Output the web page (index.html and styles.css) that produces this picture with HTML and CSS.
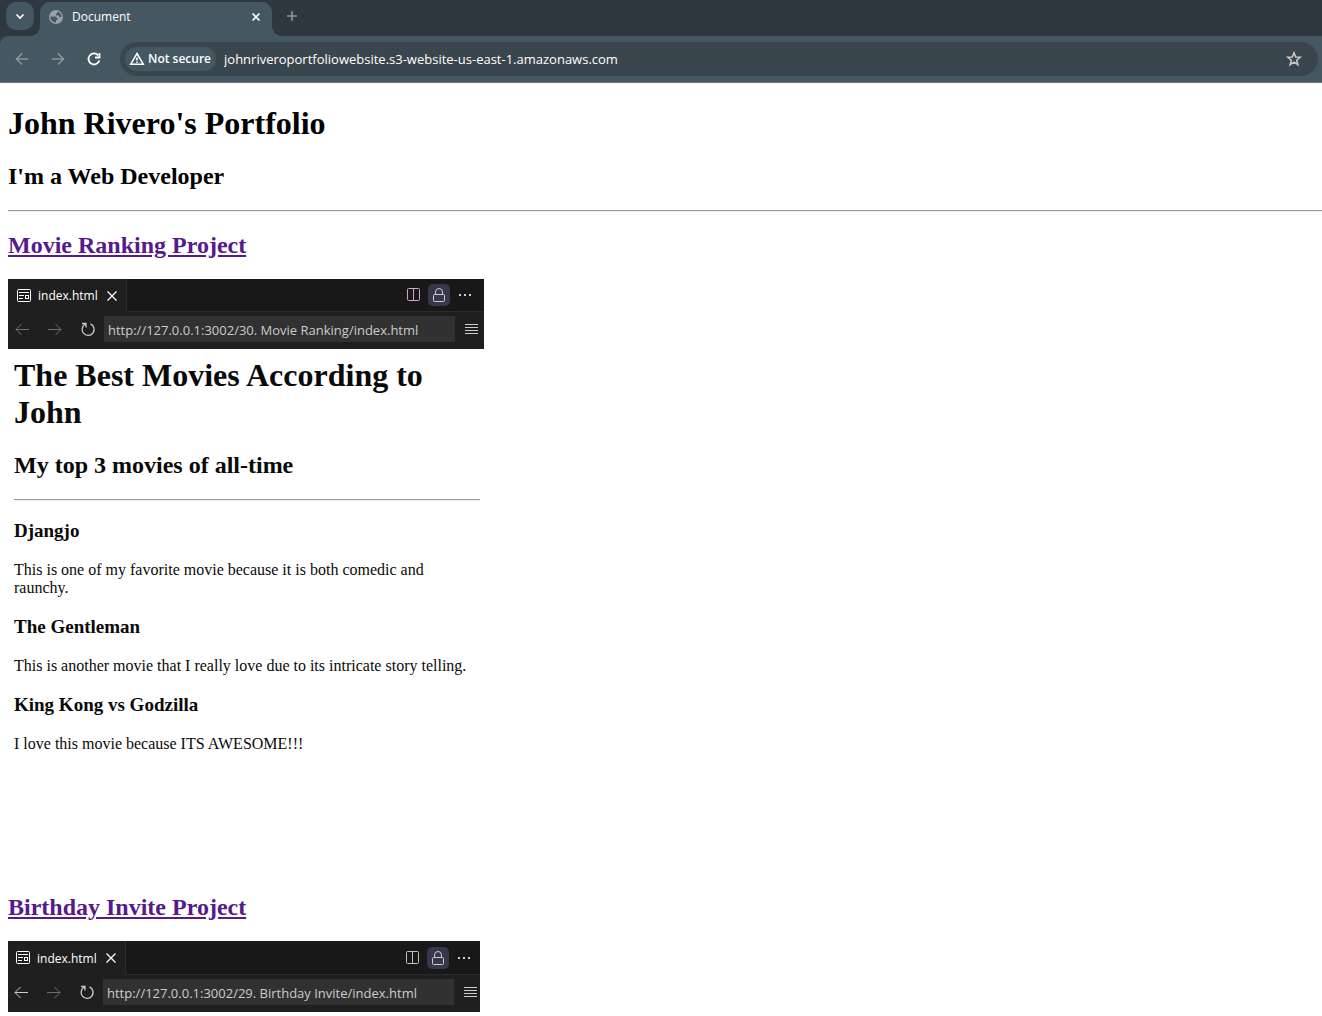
FILE: index.html
```html
<!DOCTYPE html>
<html lang="en">
<head>
<meta charset="utf-8">
<title>Document</title>
<link rel="stylesheet" href="styles.css">
</head>
<body>
<svg class="defs" aria-hidden="true">
  <symbol id="i-left" viewBox="0 0 16 16"><path d="M15 8.500H2M7.500 3 2 8.500 7.500 14"/></symbol>
  <symbol id="i-right" viewBox="0 0 16 16"><path d="M1 8.500h13M8.500 3 14 8.500 8.500 14"/></symbol>
  <symbol id="i-close" viewBox="0 0 16 16"><path stroke-width="1.300" d="M3.500 3.500l9 9M12.500 3.500l-9 9"/></symbol>
  <symbol id="i-page" viewBox="0 0 16 16"><rect x="1.500" y="1.500" width="13" height="12" rx="1"/><path d="M3 4.500h10M3 7.500h5M3 10.500h4"/><rect x="9.500" y="7.500" width="3" height="3"/></symbol>
  <symbol id="i-reload" viewBox="0 0 16 16"><path stroke-width="1.300" d="M2 2.500h4v4M5.500 3A6 6 0 1 0 10.500 2.900"/></symbol>
  <symbol id="i-split" viewBox="0 0 16 16"><rect x="2.500" y="1.500" width="12" height="12" rx="1"/><path d="M8.500 1.500v12"/></symbol>
  <symbol id="i-lock" viewBox="0 0 16 16"><rect x="2.500" y="7.500" width="11" height="7" rx="1"/><path d="M4.500 7.500V5a3.500 3.500 0 0 1 7 0v2.500"/></symbol>
  <symbol id="i-dots" viewBox="0 0 16 16"><path stroke-width="2" d="M2 8h2M7 8h2M12 8h2"/></symbol>
  <symbol id="i-lines" viewBox="0 0 16 16"><path d="M2 3.500h13M2 6.500h13M2 9.500h13M2 12.500h13"/></symbol>
</svg>
<header class="browser">
  <div class="tabstrip">
    <button class="tab-search" aria-label="Search tabs"><svg class="icon bold" viewBox="0 0 16 16"><path d="M4.500 6.500 8 10l3.500-3.500"/></svg></button>
    <div class="tab">
      <svg class="globe" viewBox="0 0 16 16"><circle cx="8" cy="8" r="7" fill="#9aa0a6"/><path fill="#455761" d="M9.300 2.500C12 3 13.500 5 13.600 8H11.500L10.500 6.500H8V5l1.300-.8zM2.400 7.500H7.500l2 2v1.500H8v2.600C5 13.500 2.500 11 2.400 7.500z"/></svg>
      <span class="tab-title">Document</span>
      <button class="plain" aria-label="Close tab"><svg class="icon bold" viewBox="0 0 16 16"><path d="M4.500 4.500l7 7M11.500 4.500l-7 7"/></svg></button>
    </div>
    <button class="plain new-tab" aria-label="New tab"><svg class="icon bold" viewBox="0 0 16 16"><path d="M8 3v10M3 8h10"/></svg></button>
  </div>
  <div class="toolbar">
    <button class="plain dim" aria-label="Back"><svg class="icon bold" viewBox="0 0 16 16"><path d="M14 8H3M8 2.500 2.500 8 8 13.500"/></svg></button>
    <button class="plain dim" aria-label="Forward"><svg class="icon bold" viewBox="0 0 16 16"><path d="M2 8h11M8 2.500 13.500 8 8 13.500"/></svg></button>
    <button class="plain" aria-label="Reload"><svg class="icon heavy" viewBox="0 0 16 16"><path d="M13.300 9.500A5.500 5.500 0 1 1 12.300 4.500"/><path d="M13.500 2v4.500H9"/></svg></button>
    <div class="omnibox">
      <button class="chip"><svg class="icon bold" viewBox="0 0 16 16"><path d="M8 2.500 14.200 13.200H1.800z"/><path d="M8 6.500v3M8 10.500v1.500"/></svg>Not secure</button>
      <input class="address" aria-label="Address" value="johnriveroportfoliowebsite.s3-website-us-east-1.amazonaws.com">
      <button class="plain star" aria-label="Bookmark this tab"><svg class="icon bold" viewBox="0 0 16 16"><path d="M8 1.800 9.700 6l4.500.3-3.500 2.900 1.200 4.500L8 11.200l-3.900 2.500 1.200-4.500L1.800 6.300 6.300 6z"/></svg></button>
    </div>
  </div>
</header>
<main class="page">
  <h1>John Rivero's Portfolio</h1>
  <h2>I'm a Web Developer</h2>
  <hr>
  <h2><a href="#movie">Movie Ranking Project</a></h2>
  <section class="preview movie" id="movie">
    <div class="editor">
      <div class="editor-tabs">
        <div class="editor-tab"><svg class="icon"><use href="#i-page"/></svg><span>index.html</span><button class="plain" aria-label="Close"><svg class="icon"><use href="#i-close"/></svg></button></div>
        <div class="editor-actions">
          <button class="action" aria-label="Split editor"><svg class="icon split"><use href="#i-split"/></svg></button>
          <button class="action locked" aria-label="Unlock group"><svg class="icon"><use href="#i-lock"/></svg></button>
          <button class="action" aria-label="More actions"><svg class="icon"><use href="#i-dots"/></svg></button>
        </div>
      </div>
      <div class="editor-nav">
        <button class="plain faded" aria-label="Back"><svg class="icon"><use href="#i-left"/></svg></button>
        <button class="plain faded" aria-label="Forward"><svg class="icon"><use href="#i-right"/></svg></button>
        <button class="plain" aria-label="Reload"><svg class="icon"><use href="#i-reload"/></svg></button>
        <input class="editor-url" aria-label="Preview address" value="http://127.0.0.1:3002/30. Movie Ranking/index.html">
        <button class="plain" aria-label="Menu"><svg class="icon"><use href="#i-lines"/></svg></button>
      </div>
    </div>
    <div class="document">
      <h1>The Best Movies According to John</h1>
      <h2>My top 3 movies of all-time</h2>
      <hr>
      <h3>Djangjo</h3>
      <p>This is one of my favorite movie because it is both comedic and raunchy.</p>
      <h3>The Gentleman</h3>
      <p>This is another movie that I really love due to its intricate story telling.</p>
      <h3>King Kong vs Godzilla</h3>
      <p>I love this movie because ITS AWESOME!!!</p>
    </div>
  </section>
  <h2><a href="#birthday">Birthday Invite Project</a></h2>
  <section class="preview birthday" id="birthday">
    <div class="editor">
      <div class="editor-tabs">
        <div class="editor-tab"><svg class="icon"><use href="#i-page"/></svg><span>index.html</span><button class="plain" aria-label="Close"><svg class="icon"><use href="#i-close"/></svg></button></div>
        <div class="editor-actions">
          <button class="action" aria-label="Split editor"><svg class="icon split-green"><use href="#i-split"/></svg></button>
          <button class="action locked" aria-label="Unlock group"><svg class="icon"><use href="#i-lock"/></svg></button>
          <button class="action" aria-label="More actions"><svg class="icon"><use href="#i-dots"/></svg></button>
        </div>
      </div>
      <div class="editor-nav">
        <button class="plain" aria-label="Back"><svg class="icon"><use href="#i-left"/></svg></button>
        <button class="plain faded" aria-label="Forward"><svg class="icon"><use href="#i-right"/></svg></button>
        <button class="plain" aria-label="Reload"><svg class="icon"><use href="#i-reload"/></svg></button>
        <input class="editor-url" aria-label="Preview address" value="http://127.0.0.1:3002/29. Birthday Invite/index.html">
        <button class="plain" aria-label="Menu"><svg class="icon"><use href="#i-lines"/></svg></button>
      </div>
    </div>
  </section>
</main>
</body>
</html>
```
FILE: styles.css
```css
* { box-sizing: border-box; }
body {
  margin: 0;
  background: #fff;
  color: #000;
  font-family: "Liberation Serif", serif;
  font-size: 16px;
}
button, input {
  margin: 0;
  padding: 0;
  border: 0;
  background: none;
  color: inherit;
  font: inherit;
}
.defs { display: none; }
.icon {
  display: block;
  flex: none;
  width: 16px;
  height: 16px;
  fill: none;
  stroke: currentColor;
  stroke-width: 1;
}
.bold { stroke-width: 1.6; }
.heavy { stroke-width: 1.8; }
.plain { display: block; flex: none; }

/* Browser window */
.browser {
  background: #2e383e;
  color: #fff;
  font-family: "Open Sans", sans-serif;
  font-size: 12px;
}
.tabstrip {
  display: flex;
  gap: 6px;
  height: 36px;
  padding: 2px 6px 0;
}
.tab-search {
  display: grid;
  place-items: center;
  width: 28px;
  height: 28px;
  border-radius: 10px;
  background: #455761;
}
.tab {
  position: relative;
  display: flex;
  align-items: center;
  gap: 8px;
  width: 232px;
  padding: 0 8px 5px;
  border-radius: 10px 10px 0 0;
  background: #455761;
}
.tab::before, .tab::after {
  content: "";
  position: absolute;
  bottom: 0;
  width: 10px;
  height: 10px;
}
.tab::before {
  right: 100%;
  background: radial-gradient(circle at 0 0, transparent 10px, #455761 10px);
}
.tab::after {
  left: 100%;
  background: radial-gradient(circle at 100% 0, transparent 10px, #455761 10px);
}
.globe { flex: none; width: 16px; height: 16px; }
.tab-title { flex: 1; }
.new-tab { padding: 0 6px 6px; color: #8a9399; }
.toolbar {
  display: flex;
  align-items: center;
  gap: 20px;
  height: 47px;
  padding: 0 4px 1px 14px;
  border-bottom: 1px solid #66747c;
  border-radius: 8px 0 0 0;
  background: #455761;
}
.dim { color: #8b969c; }
.omnibox {
  display: flex;
  flex: 1;
  align-items: center;
  gap: 8px;
  height: 34px;
  margin-left: -2px;
  padding: 0 16px 0 5px;
  border-radius: 17px;
  background: #3a464d;
}
.chip {
  display: flex;
  align-items: center;
  gap: 3px;
  height: 24px;
  padding: 0 5px 0 4px;
  border-radius: 12px;
  background: #455761;
  font-weight: 600;
  white-space: nowrap;
}
.address { flex: 1; min-width: 0; font-size: 13px; }
.star { color: #c7c7c7; }

/* Portfolio page */
.page { padding: 22px 0 0 8px; }
h1 { margin: 0 0 21px; font-size: 32px; line-height: 37px; }
h2 { margin: 20px 0; font-size: 24px; line-height: 27px; }
hr {
  margin: 0;
  border: 0 solid;
  border-width: 1px 0;
  border-color: #9a9a9a transparent #eee;
}
a { color: #551a8b; }

/* Project previews */
.preview { max-width: 100%; }
.movie { width: 476px; min-height: 595px; }
.birthday { width: 472px; }
.editor {
  background: #1f1f1f;
  color: #ccc;
  font-family: "Open Sans", sans-serif;
  font-size: 12px;
}
.editor-tabs {
  display: flex;
  height: 33px;
  background: #181818;
}
.editor-tab {
  display: flex;
  align-items: center;
  gap: 6px;
  padding: 0 6px 0 8px;
  border-right: 1px solid #2b2b2b;
  background: #1f1f1f;
  color: #fff;
}
.editor-actions {
  display: flex;
  flex: 1;
  align-items: center;
  justify-content: flex-end;
  gap: 4px;
  padding-right: 8px;
  border-bottom: 1px solid #2b2b2b;
}
.action {
  display: grid;
  place-items: center;
  width: 22px;
  height: 22px;
  border-radius: 5px;
}
.locked { background: #36374a; }
.split { color: #d9a0d6; }
.split-green { color: #b5c9b5; }
.editor-nav {
  display: flex;
  align-items: center;
  gap: 17px;
  height: 37px;
  padding: 0 5px 3px 6px;
}
.editor-url {
  flex: 1;
  min-width: 0;
  height: 26px;
  margin: 0 -9px;
  padding: 2px 4px 0;
  background: #313131;
  font-size: 13px;
}
.faded { color: #6e6e6e; }
.birthday .editor-tabs { height: 34px; }
.birthday .editor-tab { padding-left: 7px; }
.birthday .editor-nav { padding-right: 2px; padding-left: 5px; }
.birthday .editor-actions { padding-right: 5px; }
.document { padding: 8px 4px 0 6px; color: #0a0a0a; }
.document h3 { margin: 19px 0; font-size: 19px; line-height: 22px; }
.document p { margin: 0; line-height: 18px; }
```
